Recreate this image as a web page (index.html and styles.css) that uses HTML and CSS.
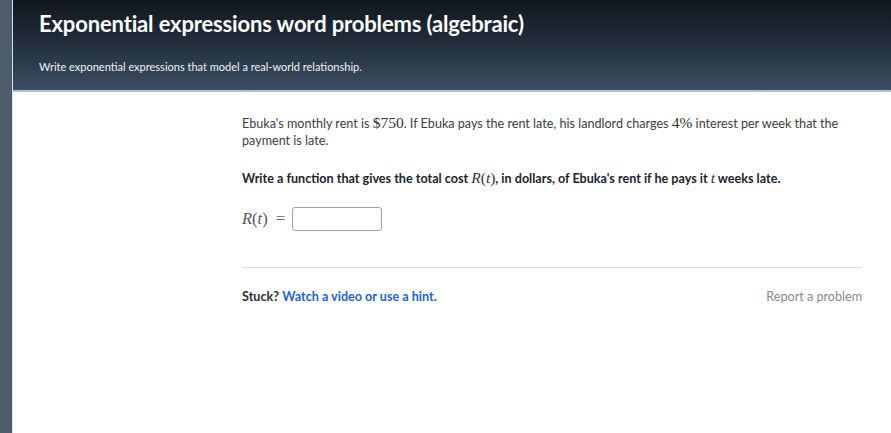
FILE: index.html
```html
<!DOCTYPE html>
<html>
<head>
<meta charset="utf-8">
<link rel="stylesheet" href="styles.css">
</head>
<body>
<div class="page">
  <div class="rail"></div>
  <div class="main">
    <header class="hero">
      <h1 class="title">Exponential expressions word problems (algebraic)</h1>
      <p class="subtitle">Write exponential expressions that model a real-world relationship.</p>
    </header>
    <section class="content">
      <div class="problem">
        <p class="para">Ebuka's monthly rent is <span class="m">$750</span>. If Ebuka pays the rent late, his landlord charges <span class="m">4%</span> interest per week that the payment is late.</p>
        <p class="para bold">Write a function that gives the total cost <span class="m"><i>R</i>(<i>t</i>)</span>, in dollars, of Ebuka's rent if he pays it <span class="m"><i>t</i></span> weeks late.</p>
        <div class="answer">
          <span class="m big"><i>R</i>(<i>t</i>)<span class="eq">=</span></span>
          <span class="box"></span>
        </div>
      </div>
      <div class="footer">
        <div class="stuck"><b>Stuck?</b> <a class="hint">Watch a video or use a hint.</a></div>
        <a class="report">Report a problem</a>
      </div>
    </section>
  </div>
</div>
</body>
</html>
```
FILE: styles.css
```css
html, body {
  margin: 0;
  padding: 0;
  height: 100%;
  background: #ffffff;
}
body {
  font-family: Lato, "Open Sans", sans-serif;
  color: #21242c;
}
.page {
  display: flex;
  min-height: 433px;
}
.rail {
  width: 12px;
  flex: none;
  background: #4e5c6a;
}
.main {
  flex: 1;
  border-left: 1px solid #cfe6ee;
}
.hero {
  height: 92px;
  box-sizing: border-box;
  padding: 10px 0 0 26px;
  background: linear-gradient(#111720 0%, #1f2a36 40%, #3b4e62 100%);
  border-bottom: 2px solid #a9c4d8;
}
.title {
  margin: 0;
  font-size: 22px;
  font-weight: 700;
  line-height: 28px;
  color: #ffffff;
  letter-spacing: -0.15px;
}
.subtitle {
  margin: 22px 0 0;
  font-size: 11px;
  line-height: 14px;
  color: #eef2f5;
}
.content {
  width: 620px;
  margin-left: 229px;
  padding-top: 22px;
}
.para {
  margin: 0 0 20px;
  font-size: 12.6px;
  line-height: 17px;
  color: #3b3e44;
}
.bold {
  font-weight: 700;
  color: #21242c;
}
.m {
  font-family: "Liberation Serif", "DejaVu Serif", serif;
  font-weight: 400;
  font-size: 15.5px;
  color: #333;
}
.m i {
  font-style: italic;
}
.answer {
  display: flex;
  align-items: center;
  gap: 7px;
  margin-top: 15px;
}
.big {
  font-size: 16.5px;
  color: #555;
}
.eq {
  margin-left: 8px;
  font-size: 17px;
  color: #666;
}
.box {
  width: 88px;
  height: 22px;
  border: 1px solid #a0a0a0;
  border-radius: 3px;
}
.footer {
  margin-top: 36px;
  border-top: 1px solid #dcdcdc;
  padding-top: 20px;
  display: flex;
  justify-content: space-between;
  font-size: 12.6px;
  line-height: 17px;
}
.stuck b {
  color: #2d2f34;
}
.hint {
  color: #1c63d6;
  font-weight: 700;
}
.report {
  color: #8a8a8a;
}
```
